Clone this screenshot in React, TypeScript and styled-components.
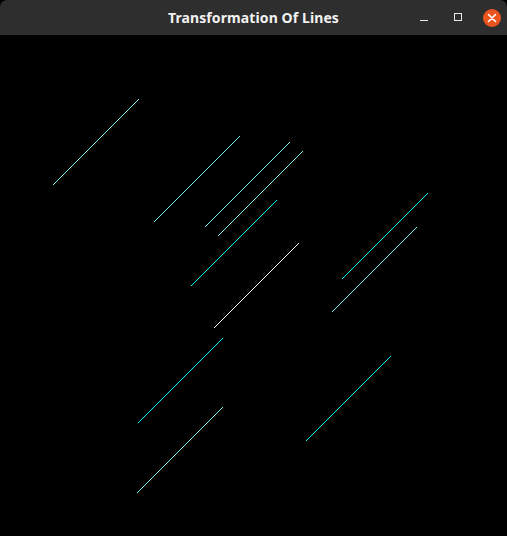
import React from "react";
import styled, { createGlobalStyle } from "styled-components";

const Global = createGlobalStyle`
  html, body { margin: 0; padding: 0; background: #000; }
  body { font-family: "Noto Sans", "DejaVu Sans", sans-serif; }
`;

const Window = styled.div`
  width: 507px;
  height: 536px;
  display: flex;
  flex-direction: column;
  background: #000;
  overflow: hidden;
`;

const TitleBar = styled.div`
  height: 35px;
  flex: 0 0 35px;
  background: #2f2e2e;
  border-radius: 7px 7px 0 0;
  position: relative;
  display: flex;
  align-items: center;
  justify-content: center;
`;

const Title = styled.div`
  color: #f2f2f2;
  font-family: "Noto Sans", "DejaVu Sans", sans-serif;
  font-weight: 700;
  font-size: 14px;
  letter-spacing: 0.1px;
  margin-top: -1px;
`;

const Controls = styled.div`
  position: absolute;
  right: 6px;
  top: 0;
  height: 35px;
  display: flex;
  align-items: center;
  gap: 16px;
`;

const ControlButton = styled.div`
  width: 18px;
  height: 18px;
  display: flex;
  align-items: center;
  justify-content: center;
`;

const MinGlyph = styled.div`
  width: 8px;
  height: 1px;
  background: #e8e8e8;
  margin-top: 5px;
`;

const MaxGlyph = styled.div`
  width: 6px;
  height: 6px;
  border: 1px solid #e8e8e8;
  margin-top: -1px;
`;

const CloseButton = styled(ControlButton)`
  border-radius: 50%;
  background: #e9541f;
`;

const Canvas = styled.svg`
  display: block;
  flex: 1 1 auto;
  background: #000;
`;

type Seg = { x1: number; y1: number; x2: number; y2: number; c: string };

const BRIGHT = "#00ffff";
const LIGHT = "#7ff2f2";
const WHITE = "#ffffff";

const lines: Seg[] = [
  { x1: 52, y1: 185, x2: 138, y2: 99, c: LIGHT },
  { x1: 153, y1: 222, x2: 239, y2: 136, c: LIGHT },
  { x1: 204, y1: 227, x2: 289, y2: 142, c: LIGHT },
  { x1: 217, y1: 236, x2: 302, y2: 151, c: LIGHT },
  { x1: 190, y1: 286, x2: 276, y2: 200, c: BRIGHT },
  { x1: 213, y1: 328, x2: 298, y2: 243, c: WHITE },
  { x1: 341, y1: 279, x2: 427, y2: 193, c: BRIGHT },
  { x1: 331, y1: 312, x2: 416, y2: 227, c: LIGHT },
  { x1: 137, y1: 423, x2: 222, y2: 338, c: BRIGHT },
  { x1: 136, y1: 493, x2: 222, y2: 407, c: LIGHT },
  { x1: 305, y1: 441, x2: 390, y2: 356, c: BRIGHT },
];

export default function App() {
  return (
    <>
      <Global />
      <Window>
        <TitleBar>
          <Title>Transformation Of Lines</Title>
          <Controls>
            <ControlButton>
              <MinGlyph />
            </ControlButton>
            <ControlButton>
              <MaxGlyph />
            </ControlButton>
            <CloseButton>
              <svg width="10" height="10" viewBox="0 0 10 10">
                <path d="M1.5 1.5 L8.5 8.5 M8.5 1.5 L1.5 8.5" stroke="#fff" strokeWidth="1.6" strokeLinecap="round" />
              </svg>
            </CloseButton>
          </Controls>
        </TitleBar>
        <Canvas width={507} height={501} viewBox="0 35 507 501">
          {lines.map((l, i) => (
            <line
              key={i}
              x1={l.x1 + 0.5}
              y1={l.y1 + 0.5}
              x2={l.x2 + 0.5}
              y2={l.y2 + 0.5}
              stroke={l.c}
              strokeWidth={1}
              shapeRendering="crispEdges"
            />
          ))}
        </Canvas>
      </Window>
    </>
  );
}
